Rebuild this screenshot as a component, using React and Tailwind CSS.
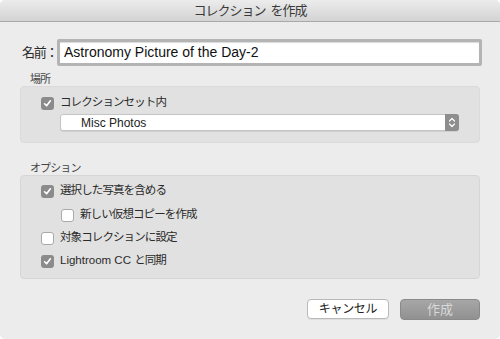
import React from "react";

const jp = "font-['Liberation_Sans','Noto_Sans_CJK_JP',sans-serif]";

function CheckBox({ checked }) {
  if (checked) {
    return (
      <span className="flex h-[13px] w-[13px] shrink-0 items-center justify-center rounded-[3px] bg-[#8b8b8b]">
        <svg width="9" height="9" viewBox="0 0 9 9" fill="none">
          <path d="M1.6 4.8 L3.6 6.8 L7.4 1.8" stroke="#fff" strokeWidth="1.6" strokeLinecap="round" strokeLinejoin="round" />
        </svg>
      </span>
    );
  }
  return <span className="h-[13px] w-[13px] shrink-0 rounded-[3px] border border-[#a9a9a9] bg-white" />;
}

function Option({ checked, indent, children }) {
  return (
    <div className={`flex h-[16px] items-center gap-[6px] ${indent ? "pl-[40px]" : "pl-[20px]"}`}>
      <CheckBox checked={checked} />
      <span className="whitespace-nowrap text-[11.5px] leading-none text-[#2a2a2a]">{children}</span>
    </div>
  );
}

const tight = "tracking-[-0.9px]";

export default function App() {
  return (
    <div className={`h-[339px] w-[500px] bg-white ${jp}`}>
      <div className="flex h-full w-full flex-col overflow-hidden rounded-[5px] bg-[#ececec]">
        <div className="flex h-[22px] shrink-0 items-center justify-center border-b border-[#a9a9a9] bg-gradient-to-b from-[#ececec] to-[#d3d3d3] text-[13px] text-[#3a3a3a]">
          <span className="tracking-[-1px]">コレクション</span>
          <span className="ml-[5px] tracking-[-1px]">を作成</span>
        </div>

        <div className="flex flex-col px-[20px]">
          <div className="mt-[17px] flex items-center">
            <span className="w-[37px] shrink-0 whitespace-nowrap pl-[2px] text-[13px] text-[#2a2a2a] tracking-[-1.2px]">名前：</span>
            <div className="flex h-[27px] flex-1 items-center rounded-[2px] border-[3px] border-[#b4b4b4] bg-white pl-[4px] -mr-[2px] shadow-[inset_0_1px_1px_rgba(0,0,0,0.15)]">
              <span className="text-[14px] text-[#111]">Astronomy Picture of the Day-2</span>
            </div>
          </div>

          <div className={`mt-[6px] h-[14px] pl-[10px] text-[11px] leading-[14px] text-[#444] ${tight}`}>場所</div>
          <div className="h-[57px] rounded-[4px] border border-[#dadada] bg-[#e1e1e1] pt-[8px]">
            <Option checked>
              <span className={tight}>コレクションセット内</span>
            </Option>
            <div className="ml-[39px] mt-[3px] flex h-[17px] w-[399px] items-center rounded-[3px] border border-[#c4c4c4] bg-white shadow-[0_1px_0_rgba(0,0,0,0.08)]">
              <span className="flex-1 pl-[20px] text-[12px] leading-none text-[#222]">Misc Photos</span>
              <span className="flex h-[17px] w-[14px] items-center justify-center rounded-r-[3px] bg-[#8e8e8e] -mr-px">
                <svg width="8" height="11" viewBox="0 0 8 11" fill="none">
                  <path d="M1.5 4 L4 1.5 L6.5 4 M1.5 7 L4 9.5 L6.5 7" stroke="#fff" strokeWidth="1.2" strokeLinecap="round" strokeLinejoin="round" />
                </svg>
              </span>
            </div>
          </div>

          <div className={`mt-[18px] h-[14px] pl-[10px] text-[11px] leading-[14px] text-[#444] ${tight}`}>オプション</div>
          <div className="flex h-[104px] flex-col rounded-[4px] border border-[#d6d6d6] bg-[#e1e1e1] pt-[7px]">
            <Option checked>
              <span className={tight}>選択した写真を含める</span>
            </Option>
            <div className="mt-[8px]">
              <Option indent>
                <span className={tight}>新しい仮想コピーを作成</span>
              </Option>
            </div>
            <div className="mt-[7px]">
              <Option>
                <span className={tight}>対象コレクションに設定</span>
              </Option>
            </div>
            <div className="mt-[7px]">
              <Option checked>
                Lightroom CC <span className={tight}>と同期</span>
              </Option>
            </div>
          </div>

          <div className="mt-[20px] flex justify-end gap-[11px]">
            <div className="flex h-[20px] w-[82px] items-center justify-center rounded-[4px] border border-[#b9b9b9] bg-white text-[12px] text-[#222] shadow-[0_1px_0_rgba(0,0,0,0.06)]">
              <span className="tracking-[-0.3px]">キャンセル</span>
            </div>
            <div className="flex h-[21px] w-[80px] items-center justify-center rounded-[4px] border border-[#8a8a8a] bg-gradient-to-b from-[#a7a7a7] to-[#919191] text-[13px] text-[#d9d9d9]">
              作成
            </div>
          </div>
        </div>
      </div>
    </div>
  );
}
